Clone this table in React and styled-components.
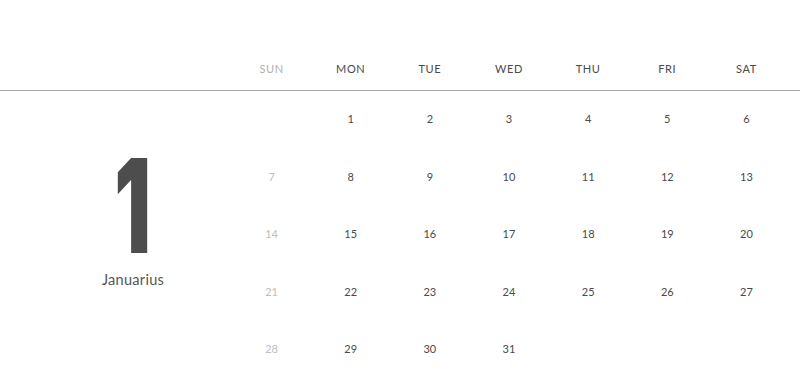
import React from "react";
import styled, { createGlobalStyle } from "styled-components";

const Global = createGlobalStyle`
  html, body { margin: 0; padding: 0; background: #fff; }
  body { font-family: Lato, "Noto Sans", sans-serif; }
`;

const Page = styled.div`
  width: 800px;
  height: 391px;
  overflow: hidden;
  background: #fff;
`;

const HeaderRow = styled.div`
  display: flex;
  align-items: flex-end;
  height: 91px;
  box-sizing: border-box;
  padding-bottom: 14px;
  border-bottom: 1px solid #a8a8a8;
`;

const Spacer = styled.div`
  width: 232px;
  flex: none;
`;

const Week = styled.div`
  width: 554px;
  display: grid;
  grid-template-columns: repeat(7, 1fr);
`;

const DayName = styled.div`
  text-align: center;
  font-size: 11px;
  line-height: 14px;
  letter-spacing: 0.6px;
  color: ${(p) => (p.$muted ? "#b0b0b0" : "#4a4a4a")};
`;

const Body = styled.div`
  display: flex;
`;

const MonthPanel = styled.div`
  width: 232px;
  flex: none;
  box-sizing: border-box;
  padding-left: 34px;
  padding-top: 65px;
  display: flex;
  flex-direction: column;
  align-items: center;
`;

const MonthNumber = styled.div`
  font-family: Inter, sans-serif;
  font-weight: 900;
  font-size: 131px;
  line-height: 100px;
  height: 100px;
  color: #4d4d4d;
  transform: scaleX(0.62);
`;

const MonthName = styled.div`
  margin-top: 15px;
  font-size: 14.5px;
  line-height: 18px;
  color: #555;
  letter-spacing: 0.3px;
`;

const Days = styled.div`
  width: 554px;
  display: grid;
  grid-template-columns: repeat(7, 1fr);
  grid-auto-rows: 57.5px;
`;

const DayCell = styled.div`
  display: flex;
  align-items: center;
  justify-content: center;
  font-size: 11px;
  color: ${(p) => (p.$muted ? "#bdbdbd" : "#4a4a4a")};
  margin-top: -2px;
`;

const names = ["SUN", "MON", "TUE", "WED", "THU", "FRI", "SAT"];

export default function App() {
  const cells = [null];
  for (let d = 1; d <= 31; d++) cells.push(d);
  return (
    <Page>
      <Global />
      <HeaderRow>
        <Spacer />
        <Week>
          {names.map((n, i) => (
            <DayName key={n} $muted={i === 0}>
              {n}
            </DayName>
          ))}
        </Week>
      </HeaderRow>
      <Body>
        <MonthPanel>
          <MonthNumber>1</MonthNumber>
          <MonthName>Januarius</MonthName>
        </MonthPanel>
        <Days>
          {cells.map((d, i) => (
            <DayCell key={i} $muted={i % 7 === 0}>
              {d}
            </DayCell>
          ))}
        </Days>
      </Body>
    </Page>
  );
}
